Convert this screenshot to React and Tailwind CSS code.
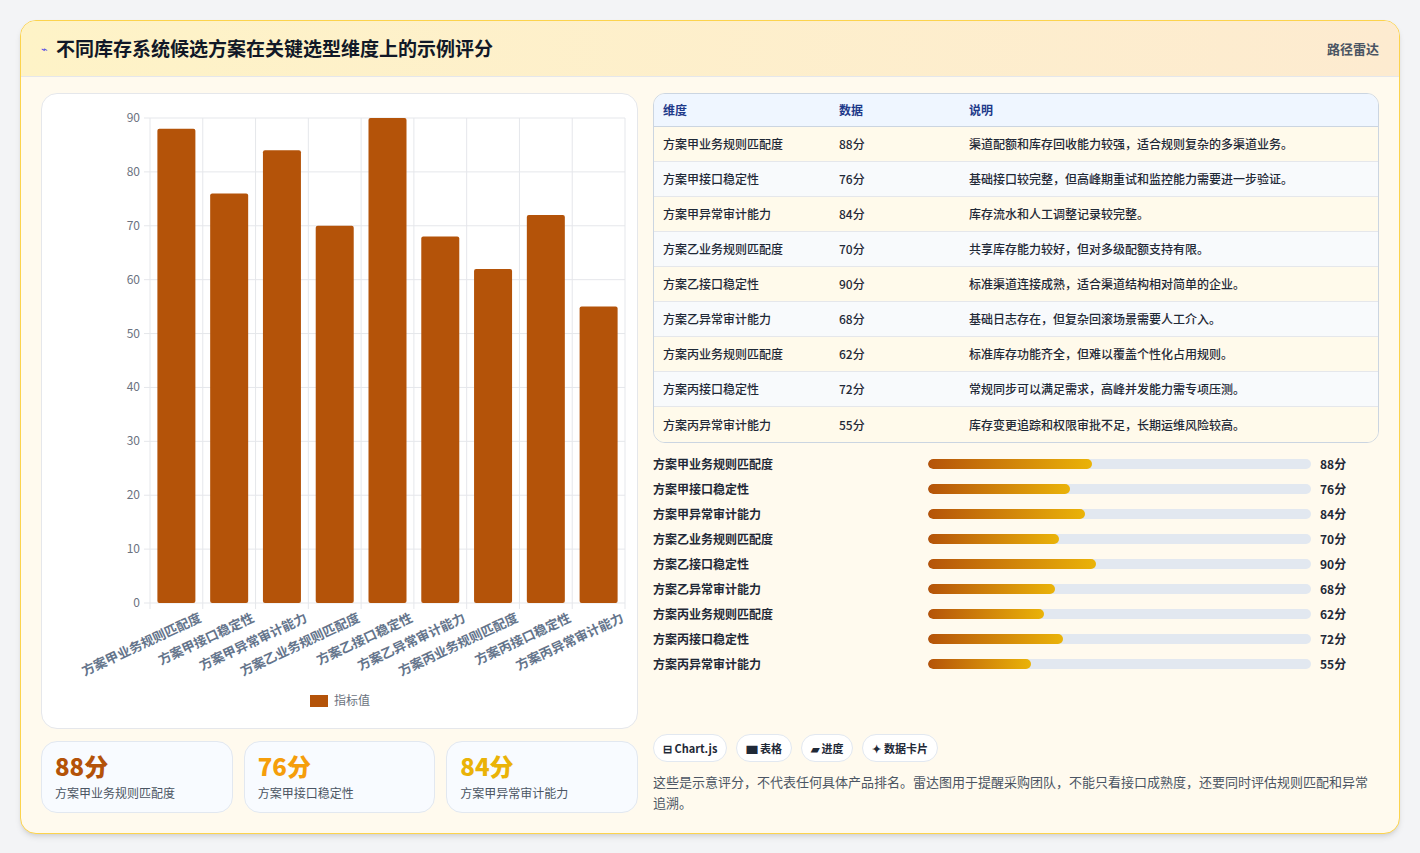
const F = { fontFamily: '"Noto Sans CJK SC","Noto Sans",sans-serif' };
const data = [
  ["方案甲业务规则匹配度", 88, "渠道配额和库存回收能力较强，适合规则复杂的多渠道业务。"],
  ["方案甲接口稳定性", 76, "基础接口较完整，但高峰期重试和监控能力需要进一步验证。"],
  ["方案甲异常审计能力", 84, "库存流水和人工调整记录较完整。"],
  ["方案乙业务规则匹配度", 70, "共享库存能力较好，但对多级配额支持有限。"],
  ["方案乙接口稳定性", 90, "标准渠道连接成熟，适合渠道结构相对简单的企业。"],
  ["方案乙异常审计能力", 68, "基础日志存在，但复杂回滚场景需要人工介入。"],
  ["方案丙业务规则匹配度", 62, "标准库存功能齐全，但难以覆盖个性化占用规则。"],
  ["方案丙接口稳定性", 72, "常规同步可以满足需求，高峰并发能力需专项压测。"],
  ["方案丙异常审计能力", 55, "库存变更追踪和权限审批不足，长期运维风险较高。"],
];

function Chart() {
  const x0 = 108, x1 = 583, y0 = 24, y1 = 509;
  const cw = (x1 - x0) / 9;
  const yv = v => y1 - (v / 90) * (y1 - y0);
  return (
    <svg width="596" height="636" style={F}>
      {[0,10,20,30,40,50,60,70,80,90].map(v => (
        <g key={v}>
          <line x1={x0 - 6} x2={x1} y1={yv(v)} y2={yv(v)} stroke="#e5e7eb" />
          <text x={x0 - 10} y={yv(v) + 4} textAnchor="end" fontSize="12" fill="#6b7280">{v}</text>
        </g>
      ))}
      {Array.from({ length: 10 }).map((_, i) => (
        <line key={i} x1={x0 + i * cw} x2={x0 + i * cw} y1={y0} y2={y1 + 6} stroke="#e5e7eb" />
      ))}
      {data.map(([n, v], i) => {
        const cx = x0 + i * cw + cw / 2;
        return (
          <g key={n}>
            <rect x={cx - 19} y={yv(v)} width="38" height={y1 - yv(v)} rx="2" fill="#b45309" />
            <text x={cx + 26} y={y1 + 18} textAnchor="end" fontSize="13" fontWeight="600" fill="#64748b" transform={`rotate(-25 ${cx + 26} ${y1 + 18})`}>{n}</text>
          </g>
        );
      })}
      <rect x="268" y="601" width="18" height="12" fill="#b45309" />
      <text x="292" y="611" fontSize="12" fill="#6b7280">指标值</text>
    </svg>
  );
}

export default function App() {
  return (
    <div className="min-h-[853px] bg-[#f3f4f6] p-5 pb-0" style={F}>
      <div className="rounded-2xl border border-[#fcd34d] bg-[#fffaee] overflow-hidden shadow-md">
        <div className="h-14 flex items-center justify-between px-5 bg-gradient-to-r from-[#fef3c7] to-[#fdebd0] border-b border-[#e5e7eb]">
          <div className="flex items-center gap-2">
            <span className="text-[11px] text-[#4f46e5]">⌁</span>
            <span className="text-[19px] font-bold text-[#111827]">不同库存系统候选方案在关键选型维度上的示例评分</span>
          </div>
          <span className="text-[13px] font-semibold text-[#4b5563]">路径雷达</span>
        </div>
        <div className="flex gap-[15px] p-5 pt-4">
          <div className="w-[597px] flex flex-col gap-3">
            <div className="h-[636px] bg-white rounded-2xl border border-[#e5e7eb]"><Chart /></div>
            <div className="grid grid-cols-3 gap-[11px]">
              {[["88分","#b45309",data[0][0]],["76分","#f59e0b",data[1][0]],["84分","#eab308",data[2][0]]].map(([v,c,l]) => (
                <div key={l} className="h-[72px] rounded-2xl border border-[#e2e8f0] bg-[#f8fbff] px-[13px] pt-2">
                  <div className="text-[24px] font-extrabold leading-8" style={{ color: c }}>{v}</div>
                  <div className="text-[12px] text-[#4b5563] mt-0.5">{l}</div>
                </div>
              ))}
            </div>
          </div>
          <div className="flex-1 flex flex-col">
            <div className="rounded-xl border border-[#cbd5e1] overflow-hidden text-[12px]">
              <div className="flex h-[33px] items-center bg-[#eff6ff] border-b border-[#cbd5e1] font-bold text-[#1e3a8a]">
                <div className="w-[185px] pl-[9px]">维度</div><div className="w-[130px]">数据</div><div>说明</div>
              </div>
              {data.map(([n, v, d], i) => (
                <div key={n} className={`flex h-[35px] items-center text-[#1f2937] font-medium ${i % 2 ? "bg-[#f8fafc]" : "bg-[#fffaeb]"} ${i < 8 ? "border-b border-[#e5e7eb]" : ""}`}>
                  <div className="w-[185px] pl-[9px]">{n}</div><div className="w-[130px]">{v}分</div><div>{d}</div>
                </div>
              ))}
            </div>
            <div className="mt-[11px] flex flex-col gap-[5px]">
              {data.map(([n, v]) => (
                <div key={n} className="flex items-center h-[20px] text-[12px] font-semibold text-[#1f2937]">
                  <div className="w-[275px]">{n}</div>
                  <div className="w-[383px] h-[10px] rounded-full bg-[#e2e8f0] overflow-hidden">
                    <div className="h-full rounded-full bg-gradient-to-r from-[#b45309] to-[#eab308]" style={{ width: `${v / 2.05}%` }} />
                  </div>
                  <div className="ml-[9px]">{v}分</div>
                </div>
              ))}
            </div>
            <div className="mt-auto flex gap-[9px]">
              {["⊟ Chart.js","▆ 表格","▰ 进度","✦ 数据卡片"].map(t => (
                <span key={t} className="h-[28px] px-[9px] flex items-center rounded-full border border-[#e2e8f0] bg-white text-[11px] font-semibold text-[#1f2937]">{t}</span>
              ))}
            </div>
            <p className="mt-[9px] text-[13px] leading-[21px] text-[#4b5563]">这些是示意评分，不代表任何具体产品排名。雷达图用于提醒采购团队，不能只看接口成熟度，还要同时评估规则匹配和异常追溯。</p>
          </div>
        </div>
      </div>
    </div>
  );
}
